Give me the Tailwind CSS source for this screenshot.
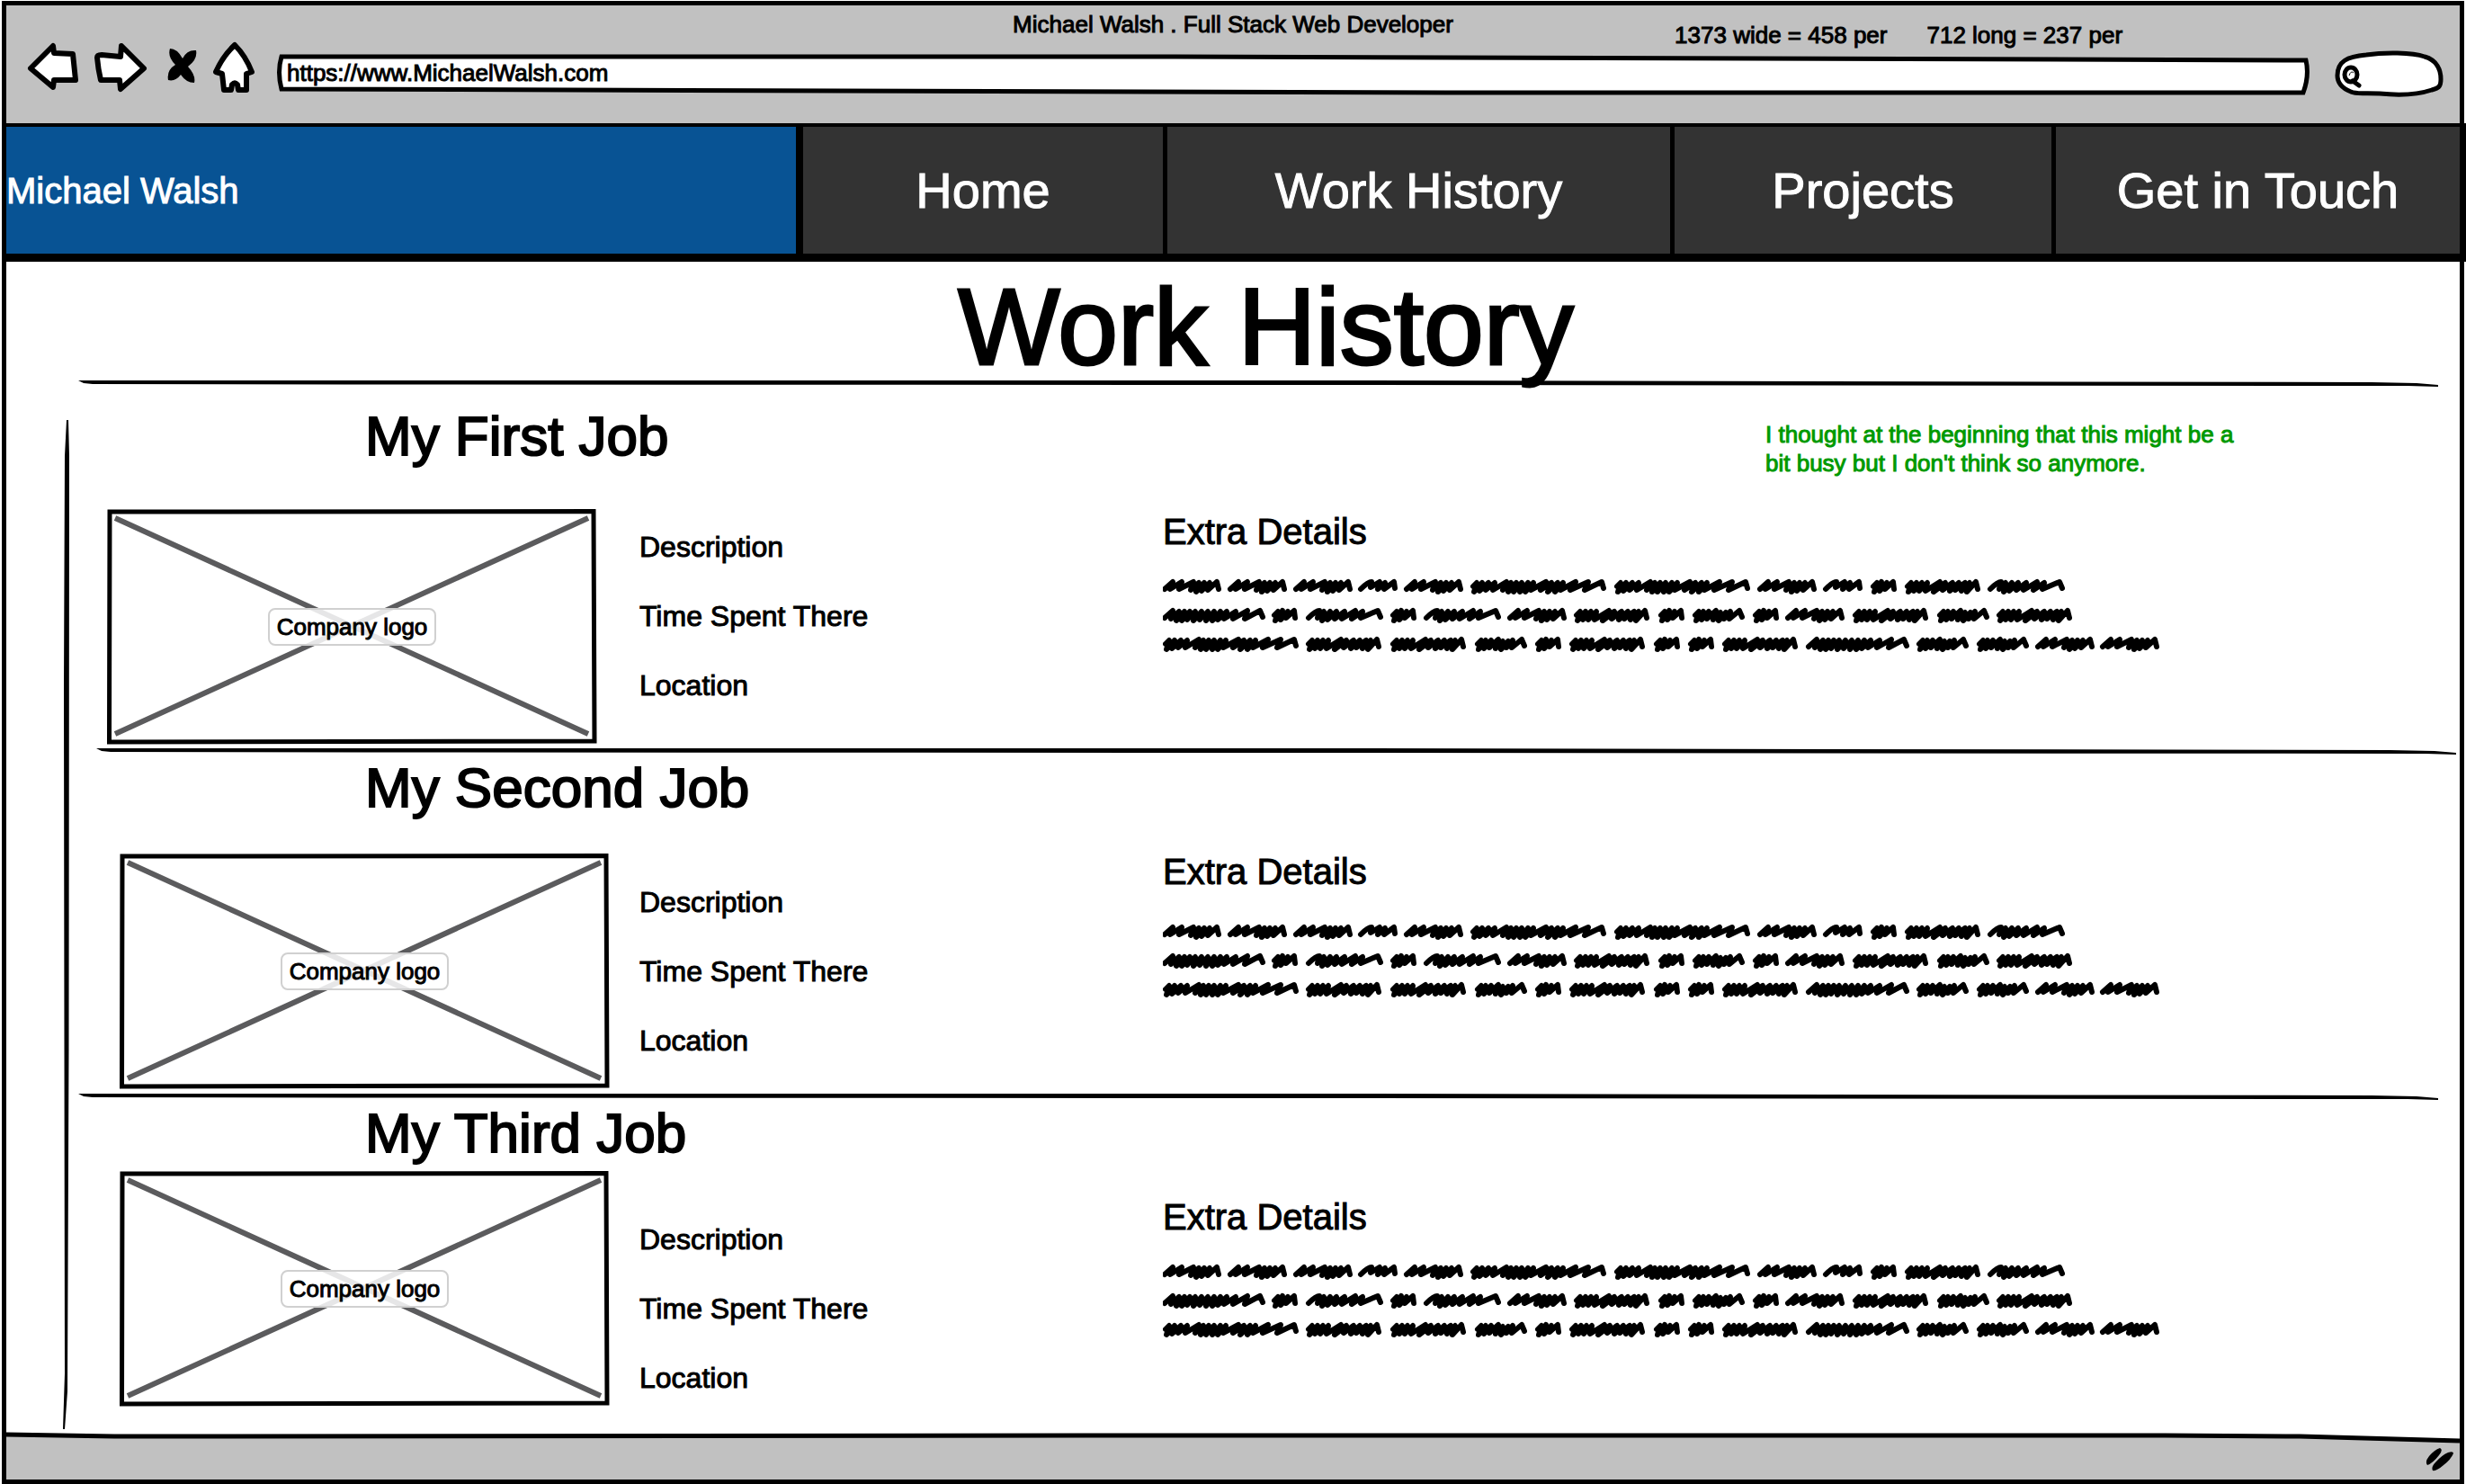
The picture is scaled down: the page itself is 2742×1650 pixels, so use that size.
<!DOCTYPE html>
<html lang="en">
<head>
<meta charset="utf-8">
<meta name="viewport" content="width=device-width, initial-scale=1">
<title>Michael Walsh . Full Stack Web Developer</title>
<script src="https://cdn.jsdelivr.net/npm/@tailwindcss/browser@4"></script>
</head>
<body class="bg-white text-black font-['Liberation_Sans',Arial,sans-serif] [-webkit-text-stroke:1px]">

<!-- Shared line art -->
<svg class="hidden" aria-hidden="true">
  <defs>
    <g id="w-uu"><path d="M4 8L8 4L5 14L13 3L11 13L19 4L17 11L26 3L27 11"/></g>
    <g id="w-nu"><path d="M2 11Q10 3 14 3L13 9L23 3L21 11L29 4L28 11L39 3L40 10"/></g>
    <g id="w-wn"><path d="M4 8L8 4L5 14L13 4L11 13L19 4L17 12L27 3L24 13L32 5L30 14L38 5L36 12L43 4L42 12L53 3L56 10"/></g>
    <g id="w-mm"><path d="M2 11L11 3L8 11L21 3L18 11L34 3L31 12L40 4L37 14L46 4L43 13L52 4L50 12L60 3L62 11"/></g>
    <g id="w-nn"><path d="M2 11Q10 3 14 3L12 11L19 4L17 14L26 4L23 13L33 4L31 12L42 4L39 12L54 3L50 12L62 4L60 11L79 3L82 10"/></g>
    <g id="w-wm"><path d="M4 8L8 4L5 14L14 4L11 13L20 4L17 13L26 4L24 13L40 3L33 14L46 4L43 12L54 4L51 13L61 4L57 12L68 4L64 13L73 4L70 14L80 3L82 11"/></g>
    <g id="w-long"><path d="M2 11L11 3L9 12L18 4L15 14L24 4L21 14L30 4L27 13L36 4L34 14L43 4L41 13L50 4L48 14L57 4L55 14L64 4L61 13L71 4L68 12L81 4L78 12L94 3L91 12L108 3L111 10"/></g>
    <g id="w-xl"><path d="M4 8L8 4L5 14L14 4L11 13L21 4L18 12L28 4L26 12L41 3L37 12L46 4L43 14L52 4L49 14L58 4L56 14L65 4L62 14L71 4L68 12L85 3L79 12L91 4L87 14L98 4L95 14L104 4L101 12L118 3L112 12L132 3L128 12L147 3L149 10"/></g>

    <symbol id="scribble" viewBox="0 0 1110 84">
      <g fill="none" stroke="#000" stroke-width="6" stroke-linejoin="round" stroke-linecap="round">
        <use href="#w-mm" x="0" y="2"/><use href="#w-mm" x="73" y="2"/><use href="#w-mm" x="146" y="2"/><use href="#w-nu" x="218" y="2"/><use href="#w-mm" x="269" y="2"/><use href="#w-xl" x="341" y="2"/><use href="#w-xl" x="501" y="2"/><use href="#w-mm" x="662" y="2"/><use href="#w-nu" x="735" y="2"/><use href="#w-uu" x="786" y="2"/><use href="#w-wm" x="824" y="2"/><use href="#w-nn" x="918" y="2"/>
        <use href="#w-long" x="0" y="34"/><use href="#w-uu" x="120" y="34"/><use href="#w-nn" x="160" y="34"/><use href="#w-uu" x="252" y="34"/><use href="#w-nn" x="291" y="34"/><use href="#w-mm" x="384" y="34"/><use href="#w-wm" x="456" y="34"/><use href="#w-uu" x="550" y="34"/><use href="#w-wn" x="588" y="34"/><use href="#w-uu" x="655" y="34"/><use href="#w-mm" x="693" y="34"/><use href="#w-wm" x="766" y="34"/><use href="#w-wn" x="860" y="34"/><use href="#w-wm" x="926" y="34"/>
        <use href="#w-xl" x="-1" y="66"/><use href="#w-wm" x="158" y="66"/><use href="#w-wm" x="252" y="66"/><use href="#w-wn" x="346" y="66"/><use href="#w-uu" x="413" y="66"/><use href="#w-wm" x="451" y="66"/><use href="#w-uu" x="545" y="66"/><use href="#w-uu" x="583" y="66"/><use href="#w-wm" x="621" y="66"/><use href="#w-long" x="716" y="66"/><use href="#w-wn" x="837" y="66"/><use href="#w-wn" x="904" y="66"/><use href="#w-mm" x="971" y="66"/><use href="#w-mm" x="1043" y="66"/>
      </g>
    </symbol>

    <symbol id="rule" viewBox="0 0 2624 8" preserveAspectRatio="none">
      <path d="M0 0L1400 0L2550 2L2600 3L2624 5L2624 7L2590 6L1400 5L300 4.500L16 4L6 3Z"/>
    </symbol>

    <symbol id="cross" viewBox="0 0 545 262" preserveAspectRatio="none">
      <path d="M9 10L535 250M535 10L9 250" fill="none" stroke="#5b5b5d" stroke-width="6"/>
      <path d="M3 3L541 2.500L542 258L2.500 259Z" fill="none" stroke="#000" stroke-width="5"/>
    </symbol>
  </defs>
</svg>

<div class="min-h-screen flex flex-col px-[2px] py-px">
  <div class="flex-1 flex flex-col border-5 border-black">

    <!-- Browser chrome -->
    <header class="bg-[#c1c1c1] h-[131px] flex flex-col">
      <div class="grid grid-cols-[1fr_auto_1fr] h-[51px] text-[26px] leading-[30px]">
        <p class="col-start-2 pt-[6px]">Michael Walsh . Full Stack Web Developer</p>
        <p class="pt-[18px] pl-[22%] flex gap-11 whitespace-nowrap"><span>1373 wide = 458 per</span><span>712 long = 237 per</span></p>
      </div>
      <div class="flex pl-6 pr-[18px] -mt-3 h-16">
        <div class="flex items-center gap-[18px] w-[276px] pb-[6px]" role="group" aria-label="Browser controls">
          <button type="button" aria-label="Back"><svg class="w-[56px] h-[56px] overflow-visible" viewBox="0 0 56 56" fill="#fff" stroke="#000" stroke-width="6" stroke-linejoin="round"><path d="M3 30L28 5L29 13L50 14L53 43L29 43L28 51Z"/></svg></button>
          <button type="button" aria-label="Forward"><svg class="w-[58px] h-[56px] overflow-visible" viewBox="0 0 58 56" fill="#fff" stroke="#000" stroke-width="6" stroke-linejoin="round"><path d="M3 18Q3 15 8 15L29 17L30 5L55 30L29 53L28 43L7 43Q4 30 3 18Z"/></svg></button>
          <button type="button" aria-label="Stop" class="ml-1"><svg class="w-[34px] h-[56px]" viewBox="0 0 34 56"><path d="M4 8Q12 8 18 19Q23 9 33 10Q35 20 24 28Q33 38 31 46Q22 46 16 37Q10 45 2 43Q0 32 10 26Q1 17 4 8Z"/></svg></button>
          <button type="button" aria-label="Home"><svg class="w-[46px] h-[56px] overflow-visible" viewBox="0 0 46 56" fill="#fff" stroke="#000" stroke-width="6" stroke-linejoin="round"><path d="M24 4Q36 16 43 34L37 36L37 54L28 54L27 48Q24 45 21 48L20 54L12 54L10 36L3 34Q11 16 24 4Z"/></svg></button>
        </div>
        <div class="relative flex-1 h-[46px] mt-[15px]">
          <svg class="absolute inset-0 size-full" viewBox="0 0 2260 46" preserveAspectRatio="none" aria-hidden="true"><path d="M6 3L1000 3L2256 7Q2260 24 2253 43L1300 43L6 39Q1 20 6 3Z" fill="#fff" stroke="#000" stroke-width="5"/></svg>
          <input type="url" aria-label="Address" value="https://www.MichaelWalsh.com" class="relative block w-full h-[42px] px-3 bg-transparent text-[26px] outline-none">
        </div>
        <div class="relative w-[121px] h-[52px] ml-7 mt-[11px]">
          <svg class="absolute inset-0 size-full" viewBox="0 0 121 52" aria-hidden="true"><path d="M3 28C3 12 14 7 35 5C55 2 86 2 100 7C114 11 118 22 118 32C118 40 116 42 108 44C90 50 70 50 50 48C30 47 24 49 18 46C8 42 3 36 3 28Z" fill="#fff" stroke="#000" stroke-width="5"/><g fill="none" stroke="#000" stroke-width="5" stroke-linecap="round"><ellipse cx="18" cy="27" rx="7" ry="8"/><path d="M20 34L27 39"/></g><path d="M16 28Q18 22 21 25" fill="none" stroke="#000" stroke-width="1"/></svg>
          <input type="search" aria-label="Search" class="relative block w-full h-full pl-8 pr-4 bg-transparent text-[26px] outline-none">
        </div>
      </div>
    </header>

    <!-- Site navigation -->
    <nav class="grid grid-cols-[886fr_405fr_564fr_424fr_449fr] h-[154px] bg-black border-t-4 border-b-[9px] border-black text-white text-[56px] -mr-[7px] pr-[7px]">
      <a href="#" class="flex items-center bg-[#085394] text-[40px] mr-2">Michael Walsh</a>
      <a href="#" class="flex items-center justify-center bg-[#333] border-r-5 border-black">Home</a>
      <a href="#" class="flex items-center justify-center bg-[#333] border-r-5 border-black">Work History</a>
      <a href="#" class="flex items-center justify-center bg-[#333] border-r-5 border-black">Projects</a>
      <a href="#" class="flex items-center justify-center bg-[#333]">Get in Touch</a>
    </nav>

    <main class="flex-1 flex flex-col">
      <h1 class="text-[120px] leading-[144px] -mb-3 text-center pl-[73px] [-webkit-text-stroke:3px]">Work History</h1>
      <svg class="block h-2 ml-20 mr-6" aria-hidden="true"><use href="#rule" width="100%" height="100%"/></svg>

      <div class="flex-1 flex">
        <div class="flex w-[73px] justify-end pt-9 pb-1 pr-[3px]">
          <svg class="w-2" viewBox="0 0 8 1122" preserveAspectRatio="none" aria-hidden="true"><path d="M5 0L7 0L8 40L7.500 700L6 1080L3 1122L1 1122L3 1060L2.500 700L2 300L3 40Z"/></svg>
        </div>

        <div class="flex-1 flex flex-col">
          <section>
            <div class="grid grid-cols-[326fr_1557fr_772fr] pt-[18px] h-[135px]">
              <h2 class="col-start-2 text-[62px] leading-[72px] [-webkit-text-stroke:2px]">My First Job</h2>
              <p class="text-[26px] leading-8 text-[#009900] pt-[18px] whitespace-nowrap">I thought at the beginning that this might be a<br>bit busy but I don't think so anymore.</p>
            </div>
            <div class="grid grid-cols-[631fr_582fr_1442fr]">
              <figure class="relative ml-[39px] w-[545px] h-[262px] flex items-center justify-center">
                <svg class="absolute inset-0 size-full" aria-hidden="true"><use href="#cross"/></svg>
                <figcaption class="relative border-2 border-[#d0d0d0] rounded-lg bg-white/85 px-2 h-[42px] leading-[38px] text-[26px]">Company logo</figcaption>
              </figure>
              <ul class="text-[32px] leading-9 flex flex-col gap-[41px] pt-6"><li>Description</li><li>Time Spent There</li><li>Location</li></ul>
              <div>
                <h3 class="text-[40px] leading-[46px] pt-[2px]">Extra Details</h3>
                <svg class="block w-[1110px] max-w-full h-[84px] mt-7" role="img" aria-label="Extra details text"><use href="#scribble"/></svg>
              </div>
            </div>
            <svg class="block h-2 w-full mt-1 pl-[27px] pr-1" aria-hidden="true"><use href="#rule" width="100%" height="100%"/></svg>
          </section>

          <section>
            <div class="grid grid-cols-[326fr_2329fr] h-[109px]">
              <h2 class="col-start-2 text-[62px] leading-[72px] [-webkit-text-stroke:2px]">My Second Job</h2>
            </div>
            <div class="grid grid-cols-[631fr_582fr_1442fr]">
              <figure class="relative ml-[53px] w-[545px] h-[262px] flex items-center justify-center">
                <svg class="absolute inset-0 size-full" aria-hidden="true"><use href="#cross"/></svg>
                <figcaption class="relative border-2 border-[#d0d0d0] rounded-lg bg-white/85 px-2 h-[42px] leading-[38px] text-[26px]">Company logo</figcaption>
              </figure>
              <ul class="text-[32px] leading-9 flex flex-col gap-[41px] pt-9"><li>Description</li><li>Time Spent There</li><li>Location</li></ul>
              <div>
                <h3 class="text-[40px] leading-[46px] -mt-[3px]">Extra Details</h3>
                <svg class="block w-[1110px] max-w-full h-[84px] mt-[34px]" role="img" aria-label="Extra details text"><use href="#scribble"/></svg>
              </div>
            </div>
            <svg class="block h-2 w-full mt-[5px] pl-[7px] pr-6" aria-hidden="true"><use href="#rule" width="100%" height="100%"/></svg>
          </section>

          <section class="pb-7">
            <div class="grid grid-cols-[326fr_2329fr] h-[78px]">
              <h2 class="col-start-2 text-[62px] leading-[72px] [-webkit-text-stroke:2px]">My Third Job</h2>
            </div>
            <div class="grid grid-cols-[631fr_582fr_1442fr]">
              <figure class="relative ml-[53px] w-[545px] h-[262px] flex items-center justify-center">
                <svg class="absolute inset-0 size-full" aria-hidden="true"><use href="#cross"/></svg>
                <figcaption class="relative border-2 border-[#d0d0d0] rounded-lg bg-white/85 px-2 h-[42px] leading-[38px] text-[26px]">Company logo</figcaption>
              </figure>
              <ul class="text-[32px] leading-9 flex flex-col gap-[41px] pt-[58px]"><li>Description</li><li>Time Spent There</li><li>Location</li></ul>
              <div>
                <h3 class="text-[40px] leading-[46px] pt-7">Extra Details</h3>
                <svg class="block w-[1110px] max-w-full h-[84px] mt-7" role="img" aria-label="Extra details text"><use href="#scribble"/></svg>
              </div>
            </div>
          </section>
        </div>
      </div>
    </main>

    <!-- Status bar -->
    <footer class="relative flex justify-end items-center h-[52px] pr-[6px]">
      <svg class="absolute inset-0 size-full overflow-visible" viewBox="0 0 2728 52" preserveAspectRatio="none" aria-hidden="true"><path d="M0 2L120 4L1200 3L2400 3L2550 4L2728 9V52H0Z" fill="#c1c1c1"/><path d="M0 2L120 4L1200 3L2400 3L2550 4L2728 9" fill="none" stroke="#000" stroke-width="5"/></svg>
      <svg class="relative w-8 h-[26px] mt-2" viewBox="0 0 32 26" aria-hidden="true"><path d="M16 0Q20 2 15 8Q8 17 2 19Q-1 15 4 9Q10 2 16 0ZM25 5Q31 3 31 6Q28 13 20 19Q12 26 8 25Q6 21 11 16Q18 8 25 5Z"/></svg>
    </footer>
  </div>
</div>
</body>
</html>
